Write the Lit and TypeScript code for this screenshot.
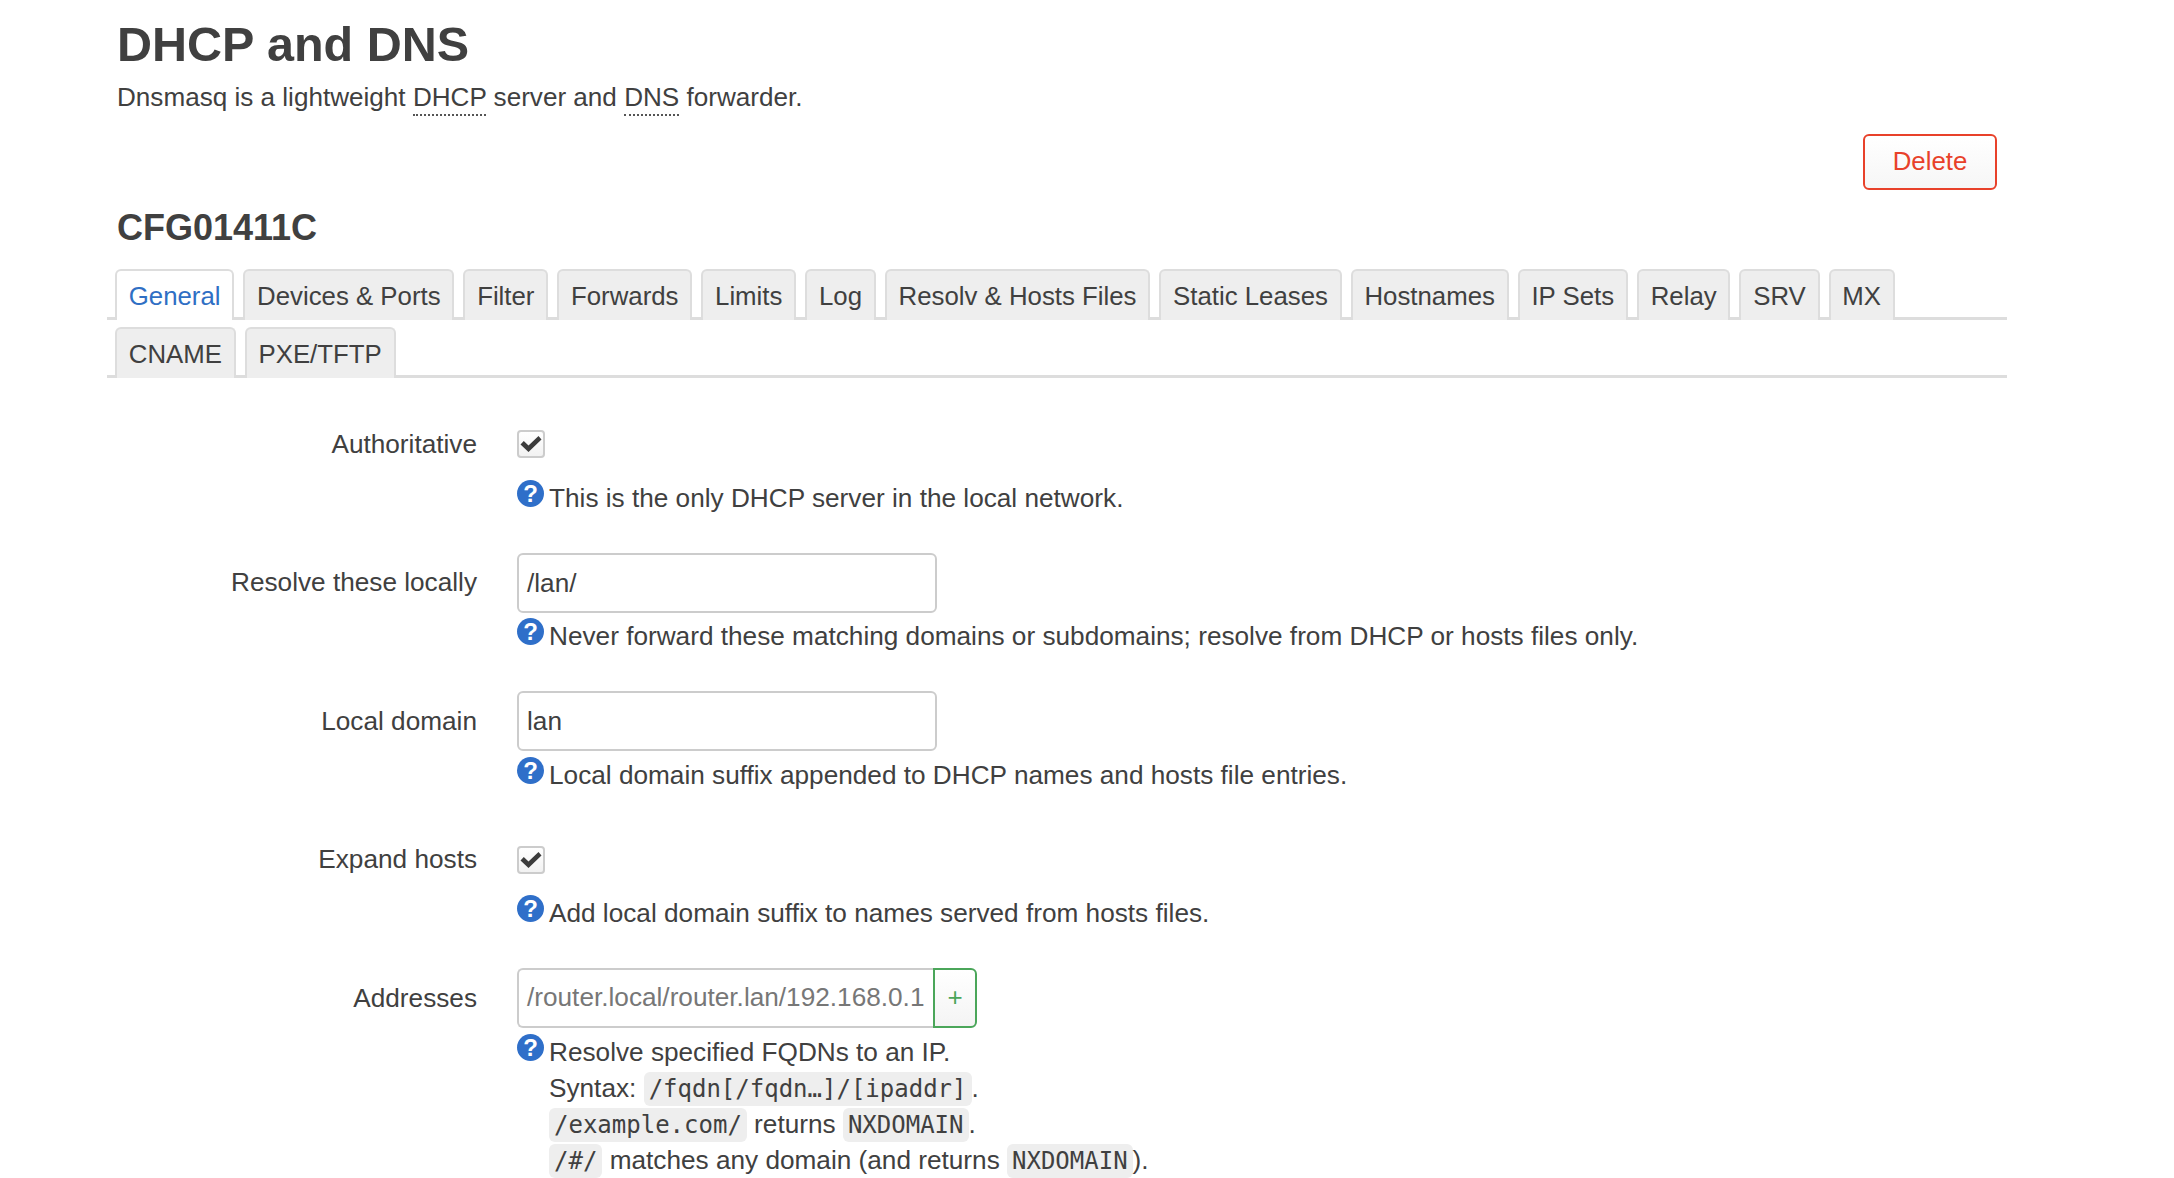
import { LitElement, html, css } from "lit";
import { customElement } from "lit/decorators.js";

const TABS1 = ["General", "Devices & Ports", "Filter", "Forwards", "Limits", "Log", "Resolv & Hosts Files", "Static Leases", "Hostnames", "IP Sets", "Relay", "SRV", "MX"];
const TABS2 = ["CNAME", "PXE/TFTP"];

const help = html`<span class="q" aria-hidden="true">?</span>`;
const check = html`<span class="cb"><svg viewBox="0 0 24 24" width="24" height="24"><path d="M1.5 12.5L4.8 9l4.7 4.5L19.5 4l3 3.5-13 12.5z" fill="#3c3c3c"/></svg></span>`;

@customElement("app-root")
export class AppRoot extends LitElement {
  static styles = css`
    :host { display: block; height: 1178px; overflow: hidden; background: #fff; color: #404040;
      font-family: "Liberation Sans", Arial, sans-serif; font-size: 26.2px; box-sizing: border-box; padding: 0 167px 0 117px; }
    h1 { margin: 0; padding-top: 17px; font-size: 48.5px; line-height: 54px; font-weight: 700; }
    .sub { margin: 0; padding-top: 8px; line-height: 36px; font-size: 26.1px; }
    abbr { text-decoration: none; border-bottom: 2px dotted #555; padding-bottom: 2px; }
    .actions { display: flex; justify-content: flex-end; padding: 19px 10px 0 0; }
    .del { box-sizing: border-box; width: 134px; height: 56px; border: 2px solid #e8412a; border-radius: 6px; color: #e8412a;
      background: linear-gradient(#fff, #f6f6f6); display: flex; align-items: center; justify-content: center; font-size: 25.8px; padding-bottom: 2px; }
    h2 { margin: 0; padding-top: 18px; font-size: 36px; line-height: 40px; font-weight: 700; }
    .tabs { display: flex; margin: 21px 0 0 -10px; padding-left: 8px; border-bottom: 3px solid #ddd; height: 48px; gap: 9px; font-size: 25.8px; }
    .tabs.second { margin-top: 7px; height: 48px; }
    .tab { box-sizing: border-box; height: 51px; padding: 0 11.77px; border: 2px solid #ddd; border-bottom: 0; border-radius: 6px 6px 0 0;
      background: #eee; line-height: 50px; white-space: nowrap; }
    .tab.active { background: #fff; color: #2f6fc4; }
    .rows { padding-top: 36.5px; }
    .row { display: grid; grid-template-columns: 360px 1fr; column-gap: 40px; padding-bottom: 37.6px; }
    .lbl { height: 59px; line-height: 58px; text-align: right; }
    .ctl { height: 59px; display: flex; align-items: center; }
    .cb { box-sizing: border-box; width: 28px; height: 28px; border: 2px solid #ccc; border-radius: 4px; background: linear-gradient(#fff, #f2f2f2);
      display: flex; align-items: center; justify-content: center; }
    .inp { box-sizing: border-box; flex: none; width: 420px; height: 60px; border: 2px solid #ccc; border-radius: 6px; padding: 0 8px; line-height: 56px; }
    .inp.ph { width: 416px; color: #777; border-right: 0; border-radius: 6px 0 0 6px; white-space: nowrap; overflow: hidden; line-height: 55px; }
    .add { box-sizing: border-box; flex: none; width: 44px; height: 60px; border: 2px solid #4ba65a; border-radius: 0 6px 6px 0; color: #4ba65a;
      background: linear-gradient(#fff, #f4f4f4); display: flex; align-items: center; justify-content: center; font-size: 26px; padding-bottom: 2px; }
    .help { display: flex; margin-top: 6px; line-height: 36px; }
    .q { flex: none; box-sizing: border-box; width: 27px; height: 27px; margin: 0 5px 0 0; border-radius: 50%; background: #2f6fc9; color: #fff;
      font-weight: 700; font-size: 24px; line-height: 27px; text-align: center; }
    .txt { display: block; }
    code { font-family: "DejaVu Sans Mono", monospace; font-size: 24px; line-height: 1; background: #eee; border-radius: 6px; padding: 3px 5px; }
  `;

  private tabs(list: string[], extra = "") {
    return html`<div class="tabs ${extra}">${list.map((t) => html`<div class="tab ${t === "General" ? "active" : ""}">${t}</div>`)}</div>`;
  }

  render() {
    return html`
      <h1>DHCP and DNS</h1>
      <p class="sub">Dnsmasq is a lightweight <abbr>DHCP</abbr> server and <abbr>DNS</abbr> forwarder.</p>
      <div class="actions"><div class="del">Delete</div></div>
      <h2>CFG01411C</h2>
      ${this.tabs(TABS1)}
      ${this.tabs(TABS2, "second")}
      <div class="rows">
        <div class="row">
          <div class="lbl">Authoritative</div>
          <div><div class="ctl">${check}</div><div class="help">${help}<span class="txt">This is the only DHCP server in the local network.</span></div></div>
        </div>
        <div class="row">
          <div class="lbl">Resolve these locally</div>
          <div><div class="ctl"><div class="inp">/lan/</div></div><div class="help">${help}<span class="txt">Never forward these matching domains or subdomains; resolve from DHCP or hosts files only.</span></div></div>
        </div>
        <div class="row">
          <div class="lbl">Local domain</div>
          <div><div class="ctl"><div class="inp">lan</div></div><div class="help">${help}<span class="txt">Local domain suffix appended to DHCP names and hosts file entries.</span></div></div>
        </div>
        <div class="row">
          <div class="lbl">Expand hosts</div>
          <div><div class="ctl">${check}</div><div class="help">${help}<span class="txt">Add local domain suffix to names served from hosts files.</span></div></div>
        </div>
        <div class="row">
          <div class="lbl">Addresses</div>
          <div><div class="ctl"><div class="inp ph">/router.local/router.lan/192.168.0.1</div><div class="add">+</div></div>
            <div class="help">${help}<span class="txt">Resolve specified FQDNs to an IP.<br>
              Syntax: <code>/fqdn[/fqdn…]/[ipaddr]</code>.<br>
              <code>/example.com/</code> returns <code>NXDOMAIN</code>.<br>
              <code>/#/</code> matches any domain (and returns <code>NXDOMAIN</code>).</span></div></div>
        </div>
      </div>
    `;
  }
}
